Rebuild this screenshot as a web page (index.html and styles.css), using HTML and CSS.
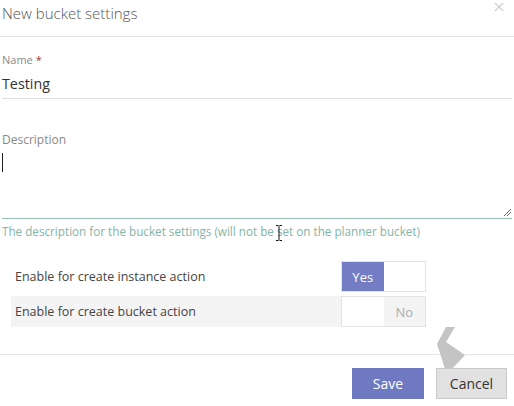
FILE: index.html
```html
<!DOCTYPE html>
<html lang="en">
<head>
    <meta charset="UTF-8">
    <meta name="viewport" content="width=device-width, initial-scale=1.0">
    <title>New bucket settings</title>
    <link rel="stylesheet" href="styles.css">
</head>
<body>
    <div class="modal">
        <div class="modal-header">
            <h1 class="modal-title">New bucket settings</h1>
            <button class="close-btn" aria-label="Close">
                <svg width="10" height="10" viewBox="0 0 10 10">
                    <path d="M1 1 L9 9 M9 1 L1 9" stroke="#cfcfcf" stroke-width="1.2" fill="none"/>
                </svg>
            </button>
        </div>

        <div class="modal-body">
            <div class="field">
                <label class="field-label">Name <span class="req">*</span></label>
                <div class="text-input">Testing</div>
            </div>

            <div class="field field-desc">
                <label class="field-label">Description</label>
                <div class="textarea">
                    <span class="caret"></span>
                    <svg class="grip" width="7" height="7" viewBox="0 0 7 7">
                        <path d="M0 7 L7 0 M3 7 L7 3" stroke="#666" stroke-width="1" fill="none"/>
                    </svg>
                </div>
                <div class="hint">The description for the bucket settings (will not be set on the planner bucket)</div>
                <svg class="ibeam" width="8" height="16" viewBox="0 0 8 16">
                    <path d="M1 0.5 H3.5 M4.5 0.5 H7 M4 1 V15 M1 15.5 H3.5 M4.5 15.5 H7" stroke="#111" stroke-width="1" fill="none"/>
                </svg>
            </div>

            <div class="options">
                <div class="option-row">
                    <span class="option-label">Enable for create instance action</span>
                    <div class="toggle">
                        <span class="seg seg-on">Yes</span>
                        <span class="seg"></span>
                    </div>
                </div>
                <div class="option-row alt">
                    <span class="option-label">Enable for create bucket action</span>
                    <div class="toggle">
                        <span class="seg"></span>
                        <span class="seg seg-off">No</span>
                    </div>
                </div>
            </div>
        </div>

        <div class="modal-footer">
            <svg class="drag-mark" width="42" height="46" viewBox="0 0 42 46">
                <polygon points="21,1 30,1 21,16 40,29 27,43 20,43 12,18" fill="#c4c4c4"/>
            </svg>
            <button class="btn btn-primary">Save</button>
            <button class="btn btn-default">Cancel</button>
        </div>
    </div>
</body>
</html>
```

FILE: styles.css
```css
body {
    margin: 0;
    background: #fff;
    font-family: 'Open Sans', 'Segoe UI', sans-serif;
    color: #333;
}

.modal {
    width: 514px;
    position: relative;
}

.modal-header {
    height: 36px;
    border-bottom: 1px solid #e6e6e6;
    position: relative;
}

.modal-title {
    margin: 0;
    padding-left: 2px;
    font-size: 15px;
    font-weight: 300;
    line-height: 26px;
    color: #555;
}

.close-btn {
    position: absolute;
    top: 2px;
    right: 10px;
    border: none;
    background: none;
    padding: 0;
    cursor: pointer;
}

.close-btn svg {
    display: block;
}

.modal-body {
    padding: 0 2px;
}

.field {
    margin-top: 15px;
}

.field-label {
    display: block;
    font-size: 11px;
    line-height: 16px;
    color: #8a8a8a;
}

.req {
    color: #8b4040;
}

.text-input {
    margin-top: 5px;
    font-size: 14.3px;
    line-height: 22px;
    padding-bottom: 3px;
    border-bottom: 1px solid #dedede;
    color: #333;
}

.field-desc {
    margin-top: 33px;
    position: relative;
}

.field-desc .field-label {
    font-size: 12px;
}

.textarea {
    position: relative;
    height: 70px;
    border-bottom: 1px solid #98bdb6;
}

.caret {
    position: absolute;
    left: 0;
    top: 5px;
    width: 1px;
    height: 19px;
    background: #222;
}

.grip {
    position: absolute;
    right: 1px;
    bottom: 2px;
}

.hint {
    margin-top: 4px;
    font-size: 11.7px;
    line-height: 16px;
    color: #82b4a8;
}

.ibeam {
    position: absolute;
    left: 273px;
    bottom: -2px;
}

.options {
    margin: 22px 0 0 9px;
    width: 415px;
    display: flex;
    flex-direction: column;
    gap: 4px;
}

.option-row {
    display: flex;
    align-items: center;
    justify-content: space-between;
    padding-left: 4px;
}

.option-row.alt {
    background: #f4f4f4;
}

.option-label {
    font-size: 12.5px;
    color: #444;
}

.toggle {
    display: flex;
    width: 83px;
    height: 29px;
    border: 1px solid #e3e3e3;
    background: #fff;
}

.seg {
    flex: 1;
    display: flex;
    align-items: center;
    justify-content: center;
    font-size: 13px;
}

.seg-on {
    background: #737dc4;
    color: #fff;
}

.seg-off {
    background: #f4f4f4;
    color: #aaa;
}

.modal-footer {
    position: relative;
    margin-top: 27px;
    border-top: 1px solid #e6e6e6;
    padding: 13px 7px 0 0;
    display: flex;
    justify-content: flex-end;
    gap: 12px;
}

.drag-mark {
    position: absolute;
    left: 425px;
    top: -29px;
}

.btn {
    height: 31px;
    font-family: inherit;
    font-size: 14px;
    padding: 0;
    cursor: pointer;
    position: relative;
}

.btn-primary {
    width: 72px;
    background: #6f79c2;
    color: #fff;
    border: 1px solid #6f79c2;
}

.btn-default {
    width: 71px;
    background: #e1e1e1;
    color: #333;
    border: 1px solid #c9c9c9;
}
```
